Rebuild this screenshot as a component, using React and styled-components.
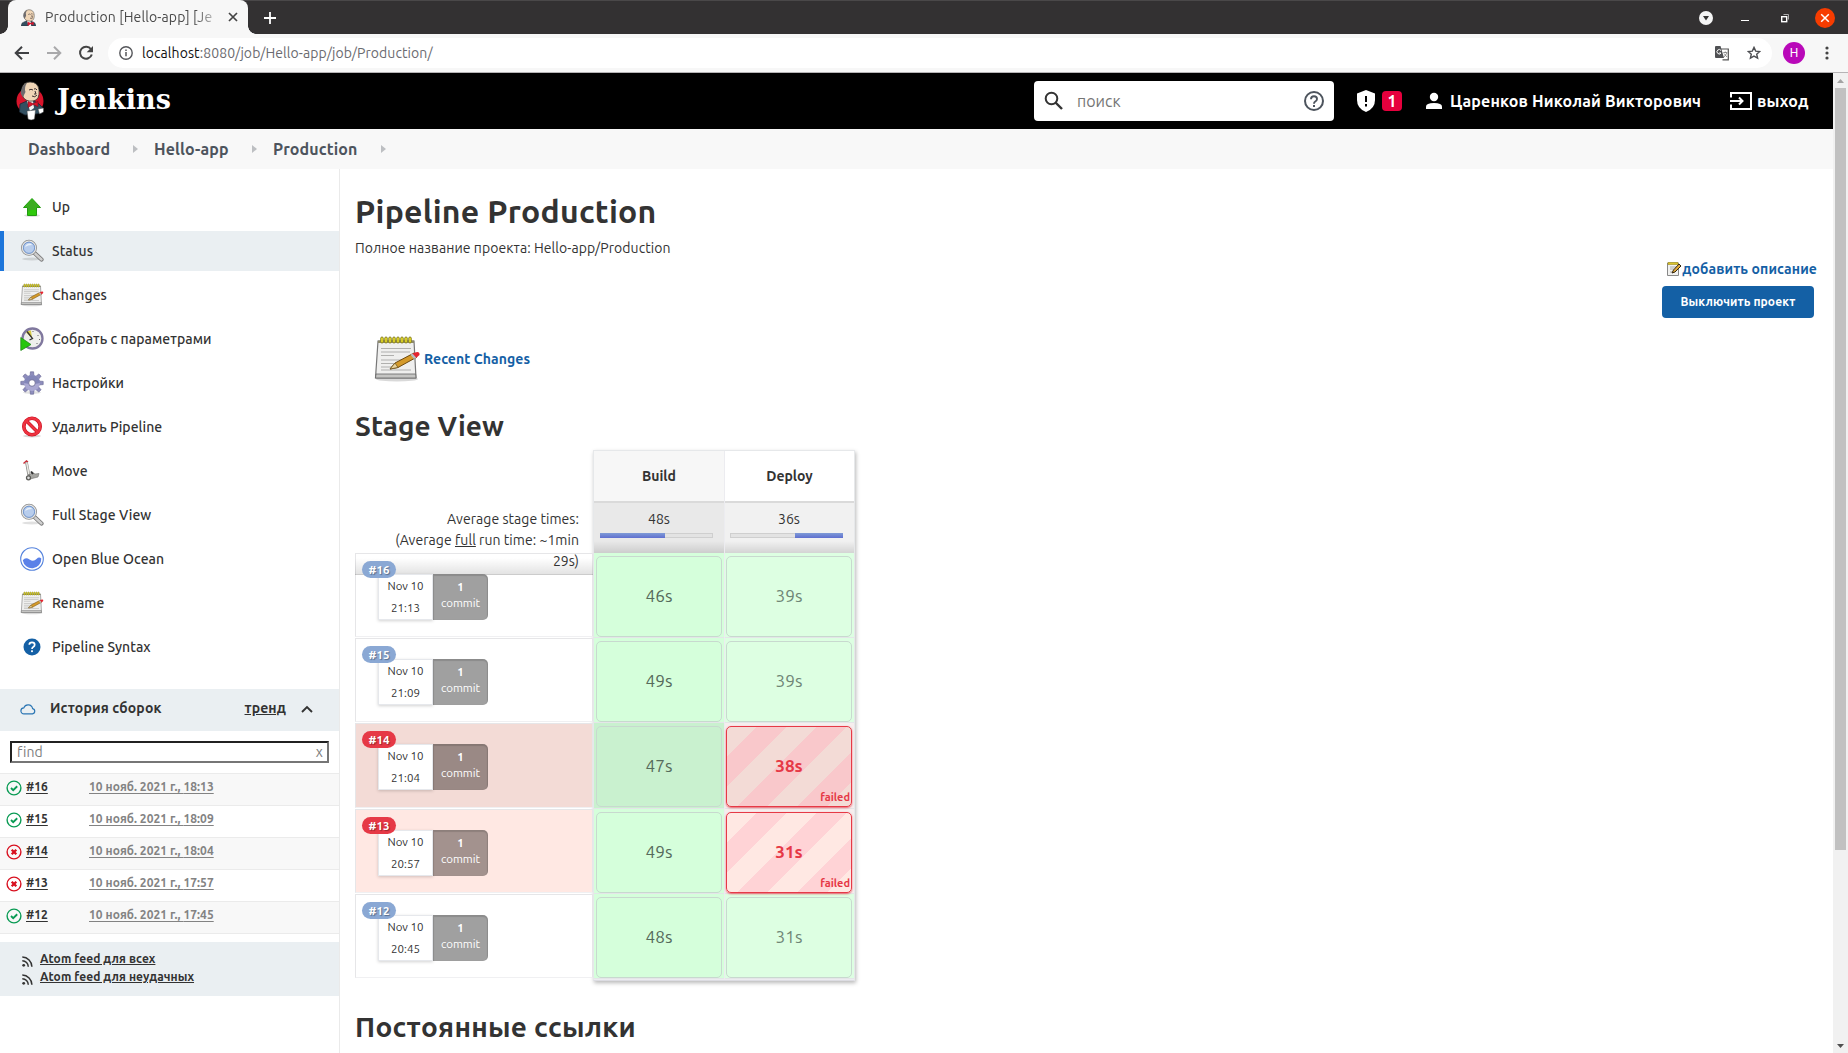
import React from "react";
import styled, { createGlobalStyle, css } from "styled-components";

const Global = createGlobalStyle`
  *, *::before, *::after { box-sizing: border-box; }
  html, body { margin: 0; padding: 0; background: #fff; }
  body {
    width: 1848px; height: 1053px; overflow: hidden;
    font-family: Ubuntu, "Noto Sans", "Open Sans", sans-serif;
    font-size: 14px; color: #333; line-height: 20px;
  }
  svg { display: block; flex: none; }
  a { color: inherit; }
`;

const Label = styled.span`
  white-space: nowrap;
  letter-spacing: ${(p) => p.$ls || 0}px;
`;

const Window = styled.div`
  width: 1848px; height: 1053px; display: flex; flex-direction: column; overflow: hidden;
`;

/* ---------- browser chrome ---------- */
const TabStrip = styled.div`
  height: 34px; flex: none; display: flex; align-items: center;
  background: #333132; border-top: 1px solid #4a4849; padding-left: 8px;
`;
const Tab = styled.div`
  position: relative; width: 240px; height: 34px; margin-top: -1px; padding-left: 13px;
  display: flex; align-items: center; background: #f7f7f7; border-radius: 8px 8px 0 0; color: #4a4a4a;
  &::before, &::after {
    content: ""; position: absolute; bottom: 0; width: 8px; height: 8px;
  }
  &::before { left: -8px; background: radial-gradient(circle at 0 0, transparent 7.5px, #f7f7f7 8px); }
  &::after { right: -8px; background: radial-gradient(circle at 100% 0, transparent 7.5px, #f7f7f7 8px); }
`;
const TabTitle = styled.div`
  width: 178px; margin: 0 5px 0 9px; font-size: 14px; white-space: nowrap; letter-spacing: ${(p) => p.$ls}px;
  mask-image: linear-gradient(90deg, #000 150px, transparent 178px);
`;
const NewTab = styled.div`margin-left: 16px;`;
const WindowButtons = styled.div`
  margin-left: auto; display: flex; align-items: center; padding-right: 13px;
`;
const Toolbar = styled.div`
  height: 39px; flex: none; display: flex; align-items: center; background: #f7f7f7;
  border-bottom: 1px solid #b6b4b6; padding-left: 14px;
`;
const NavButtons = styled.div`display: flex; gap: 16px; width: 94px;`;
const AddressBar = styled.div`
  width: 1664px; height: 30px; border-radius: 15px; background: #fff; display: flex; align-items: center;
  padding: 0 11px; color: #6b6b70;
`;
const Url = styled.div`
  margin-left: 9px; flex: 1; font-size: 14px; letter-spacing: ${(p) => p.$ls}px;
  b { color: #111; font-weight: 400; }
`;
const BarGap = styled.span`width: 18px;`;
const Avatar = styled.div`
  width: 22px; height: 22px; margin: 0 20px 0 11px; border-radius: 50%; background: #b909b9; color: #fff;
  font: 12px/22px Roboto, sans-serif; text-align: center;
`;

/* ---------- page frame ---------- */
const Viewport = styled.div`flex: 1; display: flex; min-height: 0;`;
const Page = styled.div`width: 1833px; display: flex; flex-direction: column; min-height: 0;`;
const ScrollBar = styled.div`
  width: 15px; background: #f1f1f1; display: flex; flex-direction: column; align-items: center; justify-content: space-between;
  padding: 6px 0 5px;
`;
const Thumb = styled.div`width: 11px; height: 762px; margin: 5px 0 auto; background: #c1c1c1;`;

const Header = styled.header`
  height: 56px; flex: none; background: #000; color: #fff; display: flex; align-items: center; padding-left: 15px;
  font-size: 16px; font-weight: 600;
`;
const Wordmark = styled.div`
  width: 977px; margin-left: 12px; padding-bottom: 2px; font: 700 27px/40px "DejaVu Serif", serif; letter-spacing: ${(p) => p.$ls}px;
`;
const Search = styled.div`
  width: 300px; height: 40px; padding: 0 10px; border-radius: 4px; background: #fff; color: #757575;
  display: flex; align-items: center; font-weight: 400;
`;
const SearchText = styled.span`flex: 1; margin-left: 13px; letter-spacing: ${(p) => p.$ls}px;`;
const AlertCount = styled.span`
  width: 20px; height: 20px; margin: 0 23px 0 7px; border-radius: 4px; background: #e6003d; text-align: center;
  font-weight: 700; line-height: 20px;
`;
const UserName = styled.span`
  width: 280px; margin-left: 7px; white-space: nowrap; letter-spacing: ${(p) => p.$ls}px;
`;
const Logout = styled.span`margin-left: 5px; letter-spacing: ${(p) => p.$ls}px;`;

const Breadcrumbs = styled.nav`
  height: 40px; flex: none; background: #f8f8f8; display: flex; align-items: center; padding-left: 28px;
  font-size: 16px; font-weight: 700; color: #4d545d;
`;
const Crumb = styled.div`
  width: ${(p) => p.$w}px; padding-right: 16px; display: flex; align-items: center; justify-content: space-between;
`;
const Columns = styled.div`flex: 1; display: flex; min-height: 0;`;

/* ---------- sidebar ---------- */
const Sidebar = styled.aside`width: 340px; flex: none; border-right: 1px solid #eaeaea;`;
const Tasks = styled.div`display: flex; flex-direction: column; gap: 4px; padding-top: 18px;`;
const Task = styled.div`
  height: 40px; display: flex; align-items: center; gap: 8px; padding-left: 16px; border-left: 4px solid transparent;
  font-weight: 500; letter-spacing: 0.05px;
  ${(p) => p.$active && css`background: #eaeff2; border-left-color: #1d76db;`}
`;
const HistoryHead = styled.div`
  height: 42px; margin-top: 22px; padding: 0 26px 5px 20px; background: #eaeff2; display: flex; align-items: center;
  font-weight: 700;
  svg { margin-top: 3px; }
`;
const HistoryTitle = styled.span`flex: 1; margin-left: 14px; letter-spacing: ${(p) => p.$ls}px;`;
const Trend = styled.a`margin-right: 15px; text-decoration: underline; letter-spacing: 0.1px;`;
const Find = styled.div`
  height: 22px; margin: 10px; padding: 0 4px 0 5px; display: flex; align-items: center; justify-content: space-between;
  border: 2px solid; border-color: #212121 #767676 #767676 #212121; color: #7d7d7d; letter-spacing: 0.1px;
`;
const BuildRow = styled.div`
  height: 32px; padding: 0 0 6px 6px; display: flex; align-items: center; border-top: 1px solid #ebebeb;
  background: ${(p) => (p.$odd ? "#f8f8f8" : "#fff")}; font-size: 12px; font-weight: 700;
  svg { margin-top: 3px; }
`;
const BuildId = styled.a`width: 63px; margin-left: 4px; text-decoration: underline; text-underline-offset: 2px; color: #333;`;
const BuildDate = styled.a`
  text-decoration: underline; text-underline-offset: 2px; color: #838383; white-space: nowrap; letter-spacing: ${(p) => p.$ls}px;
`;
const Builds = styled.div`border-bottom: 1px solid #ebebeb;`;
const Feeds = styled.div`
  height: 54px; margin-top: 8px; padding: 8px 0 0 22px; background: #eaeff2; font-size: 12px; font-weight: 700; line-height: 18px;
`;
const Feed = styled.div`
  display: flex; align-items: center; gap: 7px;
  a { text-decoration: underline; letter-spacing: 0.08px; }
  svg { margin-top: 4px; }
`;

/* ---------- main ---------- */
const Main = styled.main`flex: 1; min-width: 0; padding: 18px 16px 0 15px;`;
const Title = styled.h1`
  margin: 0; font-size: 32px; line-height: 48px; font-weight: 700; letter-spacing: ${(p) => p.$ls}px;
`;
const FullName = styled.div`margin-top: 3px; letter-spacing: ${(p) => p.$ls}px;`;
const Actions = styled.div`
  display: flex; flex-direction: column; align-items: flex-end; padding-top: 1px; color: #1460a5; font-weight: 700;
`;
const AddDescription = styled.div`display: flex; align-items: center; letter-spacing: ${(p) => p.$ls}px;`;
const Disable = styled.button`
  width: 152px; height: 32px; margin: 7px 3px 0 0; padding: 0; border: 0; border-radius: 4px; background: #1460a5; color: #fff;
  font: 700 12px/32px Ubuntu, "Noto Sans", sans-serif; letter-spacing: 0.1px;
`;
const Recent = styled.div`
  height: 48px; margin: 17px 0 0 18px; display: flex; align-items: center; gap: 3px; color: #1460a5; font-weight: 700;
`;
const Section = styled.h2`
  margin: ${(p) => p.$top}px 0 0; font-size: 28px; line-height: 40px; font-weight: 700; letter-spacing: ${(p) => p.$ls}px; white-space: nowrap;
`;

const Stages = styled.div`
  width: 500px; margin-top: 4px; display: flex;
`;
const RunColumn = styled.div`width: 238px;`;
const Averages = styled.div`
  position: relative; z-index: 1; height: 125px; margin-bottom: -22px; padding: 0 14px 3px 0; text-align: right; line-height: 21px;
  display: flex; flex-direction: column; justify-content: flex-end;
  background: linear-gradient(transparent 108px, rgba(0,0,0,0.11) 124px, rgba(0,0,0,0.2) 124px);
`;
const Run = styled.div`
  height: ${(p) => p.$h}px; padding: 0 0 0 22px; border: 1px solid #e6e6e8; border-bottom-color: #f0f0f2; margin-bottom: 1px;
  display: flex; align-items: flex-start; position: relative;
  background: ${(p) => p.$bg || "#fff"};
`;
const RunNumber = styled.div`
  position: absolute; z-index: 2; left: 6px; top: 7px; width: 34px; height: 17px; border-radius: 9px;
  background: ${(p) => (p.$failed ? "#e63946" : "#8aa8d4")}; color: #fff; text-align: center;
  font-size: 11.5px; font-weight: 700; line-height: 17px; text-shadow: 1px 1px 1px rgba(0,0,0,0.35);
`;
const RunDate = styled.div`
  position: relative; z-index: 1; width: 55px; height: 46px; margin-top: 20px; background: #fff; border: 1px solid #e6e8ec; box-shadow: 0 1px 3px rgba(0,0,0,0.18);
  text-align: center; font-size: 11.5px; line-height: 22px;
`;
const Commits = styled.div`
  width: 55px; height: 46px; margin-top: 20px; padding-top: 5px; border-radius: 0 5px 5px 0; color: #fff; position: relative; z-index: 1;
  background: ${(p) => (p.$failed ? p.$tint : "#a0a0a0")}; box-shadow: inset 0 1px 1px 1px rgba(0,0,0,0.13);
  text-align: center; font-size: 11.5px; line-height: 16px; 
  b { display: block; }
`;
const StageGrid = styled.div`
  width: 262px; height: 531px; display: flex; border: 1px solid #e6e8ea; border-bottom-color: #dcdce2; box-shadow: 1px 2px 4px rgba(0,0,0,0.28);
  background: #ececf0; gap: 1px;
`;
const Stage = styled.div`width: ${(p) => p.$w}px;`;
const StageName = styled.div`
  height: 52px; padding-bottom: 2px; border-bottom: 2px solid #dadada; text-align: center; line-height: 50px; font-weight: 700;
  background: ${(p) => p.$bg};
`;
const StageAverage = styled.div`
  height: 50px; padding: 6px 6px 0 ${(p) => p.$left}px; text-align: center; line-height: 20px;
  background: linear-gradient(transparent 38px, rgba(0,0,0,0.12)), ${(p) => p.$bg};
`;
const Meter = styled.div`
  width: 113px; height: 5px; margin-top: 4px; padding-left: ${(p) => p.$from}px; background: #e3e3e3; box-shadow: inset 0 0 0 1px #cfcfcf;
  &::before { content: ""; display: block; width: ${(p) => p.$len}px; height: 5px; background: linear-gradient(#7f9bd6, #5f6fd0); }
`;
const Cell = styled.div`
  height: ${(p) => p.$h}px; padding: 3px 1px 1px ${(p) => p.$left}px; background: ${(p) => p.$bg}; border-bottom: 1px solid #e4e6e8;
`;
const Duration = styled.div`
  position: relative; width: 126px; height: 81px; border: 1px solid #c8d9cf; border-radius: 5px; text-align: center; font-size: 17.2px; line-height: 78px;
  color: ${(p) => (p.$soft ? "#6f8676" : "#566b5b")};
  ${(p) => p.$failed && css`
    border-color: #e63946; color: #e63946; font-weight: 700; box-shadow: 0 1px 2px rgba(230,57,70,0.8);
    background: repeating-linear-gradient(135deg, ${p.$stripes[0]} 0 21.2px, ${p.$stripes[1]} 21.2px 42.4px);
  `}
`;
const FailedTag = styled.span`
  position: absolute; right: 1px; bottom: 1px; font-size: 11px; line-height: 15px; font-weight: 700;
`;

/* ---------- icons ---------- */
const ButlerFace = () => (
  <>
    <path d="M7 7 Q9 1 15 1 Q23 1 24 9 Q25 19 18 20 Q11 21 8 16Z" fill="#f0d6b7" stroke="#3b3a36" strokeWidth=".8" />
    <path d="M7 7 Q9 2.500 12 2 Q9 6 10.500 11 Q9 14 8 16 Q4 12 7 7Z" fill="#6d6b6d" />
    <path d="M14 9 q2-1.500 4 0 M19 8 q2-1 3 1 M17 15 q3 2 5-1 M20 10 l1 3 -2 0" fill="none" stroke="#3a3030" strokeWidth="1" />
  </>
);
const Favicon = () => (
  <svg width="15" height="17" viewBox="2 0 25 28">
    <path d="M2 28 L4 23 L12 19 L19 20 L25 23 L27 28Z" fill="#335061" stroke="#1d2a36" strokeWidth=".8" />
    <path d="M12 20 L18 20 L19 28 H15Z" fill="#f5f5f5" />
    <ButlerFace />
    <path d="M13 21 L18 23 L23 21 L23 27 L18 25 L13 28Z" fill="#d8142b" />
  </svg>
);
const Butler = () => (
  <svg width="30" height="40" viewBox="0 0 30 40">
    <circle cx="15" cy="20" r="13.500" fill="#d8142b" />
    <path d="M5 23 L12 20 L19 20 L24 23 L28 27 L27 32 L20 33 L10 34 L4.500 31Z" fill="#335061" stroke="#1d2a36" strokeWidth=".8" />
    <path d="M12 20 L18 20 L19 27 L15 30Z" fill="#f5f5f5" />
    <ButlerFace />
    <path d="M13 20.500 L18 22.500 L23 20.500 L23 25.500 L18 23.500 L13 26.500Z" fill="#d8142b" stroke="#7e0c18" strokeWidth=".6" />
    <path d="M12 30 L20.500 29 L19.500 38 Q16 40 13 38Z M23 28 l5.500 -1 0 4 -4 2Z" fill="#fff" stroke="#444" strokeWidth=".5" />
  </svg>
);
const Notepad = ({ size }) => (
  <svg width={size} height={size} viewBox="0 0 48 48">
    <ellipse cx="24" cy="44" rx="21" ry="2.5" fill="#000" opacity=".15" />
    <path d="M5 6 H41 L43 43 H2.500Z" fill="#efefee" stroke="#777" strokeWidth="1.200" />
    <path d="M3 39 H42.600 L43 43 H2.500Z" fill="#c5c5c3" stroke="#666" strokeWidth=".8" />
    <path d="M5 5.500 H41 V8 H5Z" fill="#8d8a6c" />
    <path d="M8 13.500H38 M8 17H37 M8 20.500H21 M8 25H30 M8 28.500H25 M8 32H20 M8 35H38" stroke="#b0b0ae" strokeWidth="1.100" />
    {[8, 12, 16, 20, 24, 28, 32, 36].map((x) => (
      <rect key={x} x={x - 0.3} y="2" width="2.600" height="6" rx="1.200" fill="#e6dc28" stroke="#77701a" strokeWidth=".8" />
    ))}
    <path d="M17 34 L22 28 L41 18 L44 22 L25 32.500Z" fill="#d49a2a" stroke="#6e4a10" strokeWidth="1" />
    <path d="M17 34 L22 28 L25 32.500Z" fill="#ead39b" stroke="#6e5520" strokeWidth=".8" />
    <path d="M39 19 L42 17.500 Q47 16 46.500 20 L43 23Z" fill="#e5242f" />
    <path d="M37.500 19.700 L39.500 18.600 L43.300 22.700 L41 24Z" fill="#b9bcc2" />
  </svg>
);
const NoteEdit = () => (
  <svg width="16" height="16" viewBox="0 0 16 16">
    <path d="M1.500 2H12.500V14.500H1.500Z" fill="#f1f1ef" stroke="#888" />
    <path d="M2 1.500H12V3.500H2Z" fill="#d9c42b" stroke="#a08c1c" strokeWidth=".6" />
    <path d="M4 6H10 M4 8H8 M4 11H7" stroke="#aaa" />
    <path d="M6 12 L7.500 9 L13 3 L15 5 L9 11Z" fill="#e0a83a" stroke="#33260e" strokeWidth="1" />
  </svg>
);
const UpArrow = () => (
  <svg width="24" height="24" viewBox="0 0 24 24">
    <ellipse cx="12" cy="20.500" rx="8" ry="1.500" fill="#000" opacity=".13" />
    <path d="M12 3.500 L20.500 12.500 H16.500 V20.500 H7.500 V12.500 H3.500Z" fill="#2fc90c" stroke="#249a12" />
    <path d="M12 4.500 L19 12 H15.500 V15 Q11 14 8 17 V12 H5Z" fill="#42a02c" opacity=".7" />
  </svg>
);
const Magnifier = () => (
  <svg width="24" height="24" viewBox="0 0 24 24">
    <ellipse cx="12" cy="20" rx="10" ry="1.500" fill="#000" opacity=".12" />
    <path d="M14 13.500 L21.500 20.500" stroke="#777" strokeWidth="4.200" strokeLinecap="round" />
    <path d="M15 14.500 L21.500 20.500" stroke="#cfcfcf" strokeWidth="2.400" strokeLinecap="round" />
    <circle cx="9" cy="8.800" r="7" fill="#b8cdec" stroke="#8e8e8e" strokeWidth="2" />
    <circle cx="9" cy="8.800" r="6.600" fill="none" stroke="#e6e6e4" strokeWidth="1.200" />
    <circle cx="9" cy="8.800" r="5.600" fill="none" stroke="#6b91cc" strokeWidth=".9" />
    <path d="M5 8 Q6 4.500 10 4.500 Q12 5 12 6 Q8 6 5 8Z" fill="#e7f0fb" />
  </svg>
);
const ClockRun = () => (
  <svg width="24" height="24" viewBox="0 0 24 24">
    <circle cx="12.500" cy="11.500" r="10" fill="#efefec" stroke="#80789e" strokeWidth="2.300" />
    <path d="M12 11 L6 5.500 Q8 3.500 11 3.500Z" fill="#d8cc45" />
    <path d="M7 4.500 L12.500 11.500 L9.500 13" fill="none" stroke="#333" strokeWidth="1.300" />
    <path d="M18 8v1 M19.500 12v1 M17 16v1 M13 4v1" stroke="#666" />
    <path d="M.8 10.500 L11 17.500 L.8 23.500Z" fill="#27c60e" stroke="#248a1b" strokeWidth=".8" />
  </svg>
);
const Gear = () => (
  <svg width="24" height="24" viewBox="0 0 24 24">
    <ellipse cx="12" cy="21.500" rx="9" ry="1.500" fill="#000" opacity=".12" />
    <g fill="#8e8dbd" stroke="#62618f" strokeWidth=".6">
      {[0, 45, 90, 135, 180, 225, 270, 315].map((a) => (
        <path key={a} transform={`rotate(${a} 12 12)`} d="M10 6 L10.400 .8 H13.600 L14 6Z" />
      ))}
    </g>
    <circle cx="12" cy="12" r="8" fill="#aaa8d2" />
    <path d="M4 12 A8 8 0 0 1 20 12 Q12 14 4 12Z" fill="#8386b8" />
    <circle cx="12" cy="12" r="3.300" fill="#fff" stroke="#66658f" strokeWidth=".8" />
  </svg>
);
const Forbidden = () => (
  <svg width="24" height="24" viewBox="0 0 24 24">
    <ellipse cx="12" cy="21" rx="9" ry="1.500" fill="#000" opacity=".15" />
    <circle cx="12" cy="11.500" r="8.200" fill="#fff" stroke="#c81020" strokeWidth="3.600" />
    <path d="M6.500 6 L17.500 17" stroke="#c81020" strokeWidth="3.300" />
    <circle cx="12" cy="11.500" r="8.200" fill="none" stroke="#ee3340" strokeWidth="2.500" />
    <path d="M6.500 6 L17.500 17" stroke="#ee3340" strokeWidth="2.300" />
  </svg>
);
const Scooter = () => (
  <svg width="24" height="24" viewBox="0 0 24 24">
    <path d="M3.500 4.500 L6.500 2 L8 3" fill="none" stroke="#c8303a" strokeWidth="1.500" />
    <path d="M6.500 3.500 L9 17" stroke="#8b8b88" strokeWidth="2.800" />
    <path d="M6.700 4 L8.800 15" stroke="#ecebe6" strokeWidth="1.500" />
    <path d="M9 17 L12 13 L15 15 L19 14.500 L18 18 L10 20Z" fill="#a6a6a2" stroke="#6f6f6b" strokeWidth=".6" />
    <path d="M11 12.500l2 2.500" stroke="#333" strokeWidth="2" />
    <circle cx="8.500" cy="18.800" r="2" fill="#ddd" stroke="#5c5c58" strokeWidth="1.300" />
  </svg>
);
const Ocean = () => (
  <svg width="24" height="24" viewBox="0 0 24 24">
    <circle cx="12" cy="12" r="11.300" fill="#fff" stroke="#5583dd" strokeWidth="1.100" />
    <path d="M2.800 13.200 Q5.500 9.800 9.500 12.500 Q13.500 15.200 16.500 12 Q19 9.300 21.300 11.500 A9.300 9.300 0 0 1 2.800 13.200Z" fill="#5a81e8" />
  </svg>
);
const HelpBlue = () => (
  <svg width="24" height="24" viewBox="0 0 24 24">
    <circle cx="12" cy="12" r="8.500" fill="#1460a5" />
    <path d="M9.300 9.800 Q9.300 7.300 12 7.300 Q14.700 7.300 14.700 9.700 Q14.700 11 13.200 12 Q12 12.800 12 14" fill="none" stroke="#fff" strokeWidth="1.700" />
    <rect x="11.100" y="15.300" width="1.800" height="1.800" fill="#fff" />
  </svg>
);
const Cloud = () => (
  <svg width="16" height="12" viewBox="0 0 16 12">
    <path d="M4 10.900 H12.500 A2.700 2.700 0 0 0 12.600 5.600 A4.600 4.600 0 0 0 3.800 4.900 A3 3 0 0 0 4 10.900Z" fill="none" stroke="#2b76b4" strokeWidth="1.200" />
  </svg>
);
const Status = ({ ok }) => {
  const color = ok ? "#0a9b54" : "#d8101f";
  return (
    <svg width="16" height="16" viewBox="0 0 16 16">
      <circle cx="8" cy="8" r="6.900" fill="none" stroke={color} strokeWidth="1.400" />
      <path d={ok ? "M5 8 L7.200 10.100 L11.200 6.200" : "M5.700 5.700 L10.300 10.300 M10.300 5.700 L5.700 10.300"} fill="none" stroke={color} strokeWidth={ok ? 1.9 : 2.3} />
    </svg>
  );
};
const Rss = () => (
  <svg width="11" height="11" viewBox="0 0 11 11">
    <circle cx="1.700" cy="9.300" r="1.400" fill="#333" />
    <path d="M.3 4.700 A6 6 0 0 1 6.300 10.700 M.3 1.100 A9.600 9.600 0 0 1 9.900 10.700" fill="none" stroke="#333" strokeWidth="1.500" />
  </svg>
);
const Info = () => (
  <svg width="14" height="14" viewBox="0 0 14 14">
    <circle cx="7" cy="7" r="6.200" fill="none" stroke="#55565a" strokeWidth="1.400" />
    <path d="M7 6v4.300 M7 3.500v1.500" stroke="#55565a" strokeWidth="1.500" />
  </svg>
);
const Back = ({ color, flip }) => (
  <svg width="16" height="16" viewBox="0 0 16 16">
    <path transform={flip ? "translate(16 0) scale(-1 1)" : undefined} d="M15 8H2.500 M8 1.700 L1.700 8 L8 14.300" fill="none" stroke={color} strokeWidth="2" />
  </svg>
);
const Reload = () => (
  <svg width="16" height="16" viewBox="0 0 16 16">
    <path d="M13 4.300 A6 6 0 1 0 13.800 9.500" fill="none" stroke="#444" strokeWidth="2" />
    <path d="M15 1V7.300H8.700Z" fill="#444" />
  </svg>
);
const Translate = () => (
  <svg width="14" height="15" viewBox="0 0 14 15">
    <path d="M6 3H13.300V13.800H7.500" fill="none" stroke="#555" strokeWidth="1.200" />
    <path d="M0 1 Q0 0 1 0H5.500L9 12H1Q0 12 0 11Z" fill="#505154" />
    <path d="M6 4.500A2.200 2.200 0 1 0 6 7H4.200" fill="none" stroke="#fff" strokeWidth="1" />
    <path d="M8.300 6.500h4 M10.300 5.500v1 M12 7l-3 4 M9 7.500l3 3.500" stroke="#777" strokeWidth=".8" />
  </svg>
);
const Star = () => (
  <svg width="14" height="14" viewBox="0 0 14 14">
    <path d="M7 1.400 L8.700 5.100 L12.700 5.500 L9.700 8.200 L10.600 12.200 L7 10.100 L3.400 12.200 L4.300 8.200 L1.300 5.500 L5.300 5.100Z" fill="none" stroke="#4d4e52" strokeWidth="1.400" />
  </svg>
);
const Caret = () => <svg width="5" height="8" viewBox="0 0 5 8"><path d="M0 0L5 4L0 8Z" fill="#bdbfc2" /></svg>;

/* ---------- data ---------- */
const tasks = [
  ["Up", UpArrow], ["Status", Magnifier], ["Changes", Notepad], ["Собрать с параметрами", ClockRun],
  ["Настройки", Gear], ["Удалить Pipeline", Forbidden], ["Move", Scooter], ["Full Stage View", Magnifier],
  ["Open Blue Ocean", Ocean], ["Rename", Notepad], ["Pipeline Syntax", HelpBlue],
];
const history = [
  ["#16", "18:13", true], ["#15", "18:09", true], ["#14", "18:04", false], ["#13", "17:57", false], ["#12", "17:45", true],
];
const runs = [
  { id: "#16", time: "21:13", build: "46s", deploy: "39s", h: 85 },
  { id: "#15", time: "21:09", build: "49s", deploy: "39s", h: 85 },
  { id: "#14", time: "21:04", build: "47s", deploy: "38s", h: 86, failed: true, bg: "#f3dbd6", tint: "#9a8985", green: "#c9f1cf", stripes: ["#f3dbd6", "#f9c8cb"] },
  { id: "#13", time: "20:57", build: "49s", deploy: "31s", h: 85, failed: true, bg: "#ffe8e3", tint: "#a3928e", stripes: ["#ffe8e3", "#ffd3d6"] },
  { id: "#12", time: "20:45", build: "48s", deploy: "31s", h: 85 },
];

export default function App() {
  return (
    <Window>
      <Global />
      <TabStrip>
        <Tab>
          <Favicon />
          <TabTitle $ls={0.12}>Production [Hello-app] [Je</TabTitle>
          <svg width="10" height="10" viewBox="0 0 10 10"><path d="M1 1L9 9M9 1L1 9" stroke="#444" strokeWidth="1.700" /></svg>
        </Tab>
        <NewTab><svg width="12" height="12" viewBox="0 0 12 12"><path d="M6 0V12M0 6H12" stroke="#fff" strokeWidth="1.800" /></svg></NewTab>
        <WindowButtons>
          <svg width="136" height="20" viewBox="0 0 136 20">
            <circle cx="7" cy="10" r="7" fill="#f5f5f5" /><path d="M4 8h6l-3 4.500Z" fill="#333" />
            <path d="M42 12.500h8" stroke="#fff" />
            <path d="M84.500 6.500h5v5" fill="none" stroke="#aaa" /><rect x="82.700" y="8.700" width="5" height="5" fill="none" stroke="#fff" strokeWidth="1.400" />
            <circle cx="126" cy="10" r="10" fill="#f73c00" /><path d="M122.200 6.200l7.600 7.600M129.800 6.200l-7.600 7.600" stroke="#fff" strokeWidth="1.500" />
          </svg>
        </WindowButtons>
      </TabStrip>
      <Toolbar>
        <NavButtons><Back color="#3f4043" /><Back color="#a9a9ab" flip /><Reload /></NavButtons>
        <AddressBar>
          <Info />
          <Url $ls={0.08}><b>localhost</b>:8080/job/Hello-app/job/Production/</Url>
          <Translate />
          <BarGap />
          <Star />
        </AddressBar>
        <Avatar>H</Avatar>
        <svg width="4" height="14" viewBox="0 0 4 14"><g fill="#444"><circle cx="2" cy="2" r="1.600" /><circle cx="2" cy="7" r="1.600" /><circle cx="2" cy="12" r="1.600" /></g></svg>
      </Toolbar>

      <Viewport>
        <Page>
          <Header>
            <Butler />
            <Wordmark $ls={0.1}>Jenkins</Wordmark>
            <Search>
              <svg width="20" height="20" viewBox="0 0 20 20"><circle cx="7.500" cy="7.500" r="5.800" fill="none" stroke="#333" strokeWidth="2" /><path d="M11.500 11.500L18 18" stroke="#333" strokeWidth="2.400" /></svg>
              <SearchText $ls={0}>поиск</SearchText>
              <svg width="20" height="20" viewBox="0 0 20 20"><circle cx="10" cy="10" r="9" fill="none" stroke="#4d545d" strokeWidth="2" /><path d="M7 8.200Q7 5.200 10 5.200Q13 5.200 13 8Q13 9.500 11.300 10.500Q10 11.300 10 12.700" fill="none" stroke="#4d545d" strokeWidth="1.900" /><rect x="9" y="14" width="2" height="2" fill="#4d545d" /></svg>
            </Search>
            <svg width="41" height="22" viewBox="0 0 41 22"><path d="M32 0L41 3.500V10Q41 18.500 32 22Q23 18.500 23 10V3.500Z" fill="#fff" /><path d="M32 6v6M32 14v2.500" stroke="#000" strokeWidth="2" /></svg>
            <AlertCount>1</AlertCount>
            <svg width="18" height="18" viewBox="0 0 18 18"><circle cx="9" cy="5" r="4.200" fill="#fff" /><path d="M1 17V14.500Q1 11 9 11Q17 11 17 14.500V17Z" fill="#fff" /></svg>
            <UserName $ls={0.15}>Царенков Николай Викторович</UserName>
            <svg width="22" height="18" viewBox="0 0 22 18"><path d="M1 5.500V1H21V17H1V12.500M0 9H12.500M9 5.500L12.500 9L9 12.500" fill="none" stroke="#fff" strokeWidth="2" /></svg>
            <Logout $ls={0.2}>выход</Logout>
          </Header>
          <Breadcrumbs>
            <Crumb $w={126}><Label $ls={0.12}>Dashboard</Label><Caret /></Crumb>
            <Crumb $w={119}><Label $ls={0.12}>Hello-app</Label><Caret /></Crumb>
            <Crumb $w={129}><Label $ls={0.12}>Production</Label><Caret /></Crumb>
          </Breadcrumbs>
          <Columns>
            <Sidebar>
              <Tasks>
                {tasks.map(([name, Icon]) => (
                  <Task key={name} $active={name === "Status"}><Icon size={24} />{name}</Task>
                ))}
              </Tasks>
              <HistoryHead>
                <Cloud />
                <HistoryTitle $ls={0.14}>История сборок</HistoryTitle>
                <Trend>тренд</Trend>
                <svg width="12" height="8" viewBox="0 0 12 8"><path d="M1 7L6 2L11 7" fill="none" stroke="#333" strokeWidth="1.900" /></svg>
              </HistoryHead>
              <Find><span>find</span><span>x</span></Find>
              <Builds>
                {history.map(([id, time, ok], i) => (
                  <BuildRow key={id} $odd={i % 2 === 0}>
                    <Status ok={ok} /><BuildId>{id}</BuildId><BuildDate $ls={0.04}>10 нояб. 2021 г., {time}</BuildDate>
                  </BuildRow>
                ))}
              </Builds>
              <Feeds>
                <Feed><Rss /><a>Atom feed для всех</a></Feed>
                <Feed><Rss /><a>Atom feed для неудачных</a></Feed>
              </Feeds>
            </Sidebar>
            <Main>
              <Title $ls={0.25}>Pipeline Production</Title>
              <FullName $ls={0.07}>Полное название проекта: Hello-app/Production</FullName>
              <Actions>
                <AddDescription $ls={0.1}><NoteEdit />добавить описание</AddDescription>
                <Disable>Выключить проект</Disable>
              </Actions>
              <Recent><Notepad size={48} /><Label $ls={0.08}>Recent Changes</Label></Recent>
              <Section $top={23} $ls={0.07}>Stage View</Section>
              <Stages>
                <RunColumn>
                  <Averages>
                    <Label $ls={0.05}>Average stage times:</Label>
                    <Label $ls={0.05}>(Average <u>full</u> run time: ~1min</Label>
                    <Label>29s)</Label>
                  </Averages>
                  {runs.map((r) => (
                    <Run key={r.id} $h={r.h - 1} $bg={r.bg}>
                      <RunNumber $failed={r.failed}>{r.id}</RunNumber>
                      <RunDate>Nov 10<br />{r.time}</RunDate>
                      <Commits $failed={r.failed} $tint={r.tint}><b>1</b>commit</Commits>
                    </Run>
                  ))}
                </RunColumn>
                <StageGrid>
                  <Stage $w={130}>
                    <StageName $bg="#f7f7f7">Build</StageName>
                    <StageAverage $left={6} $bg="#e9e9e9">48s<Meter $from={0} $len={65} /></StageAverage>
                    {runs.map((r) => (
                      <Cell key={r.id} $h={r.h} $left={2} $bg={r.green || "#d5ffdb"}><Duration>{r.build}</Duration></Cell>
                    ))}
                  </Stage>
                  <Stage $w={129}>
                    <StageName $bg="#fff">Deploy</StageName>
                    <StageAverage $left={5} $bg="#f1f1f1">36s<Meter $from={65} $len={48} /></StageAverage>
                    {runs.map((r) => (
                      <Cell key={r.id} $h={r.h} $left={1} $bg={r.failed ? "#f6eeee" : "#ddffe2"}>
                        <Duration $soft $failed={r.failed} $stripes={r.stripes}>{r.deploy}{r.failed && <FailedTag>failed</FailedTag>}</Duration>
                      </Cell>
                    ))}
                  </Stage>
                </StageGrid>
              </Stages>
              <Section $top={26} $ls={0.25}>Постоянные ссылки</Section>
            </Main>
          </Columns>
        </Page>
        <ScrollBar>
          <svg width="7" height="4" viewBox="0 0 7 4"><path d="M0 4L3.500 0L7 4Z" fill="#a3a3a3" /></svg>
          <Thumb />
          <svg width="7" height="4" viewBox="0 0 7 4"><path d="M0 0L3.500 4L7 0Z" fill="#505050" /></svg>
        </ScrollBar>
      </Viewport>
    </Window>
  );
}
